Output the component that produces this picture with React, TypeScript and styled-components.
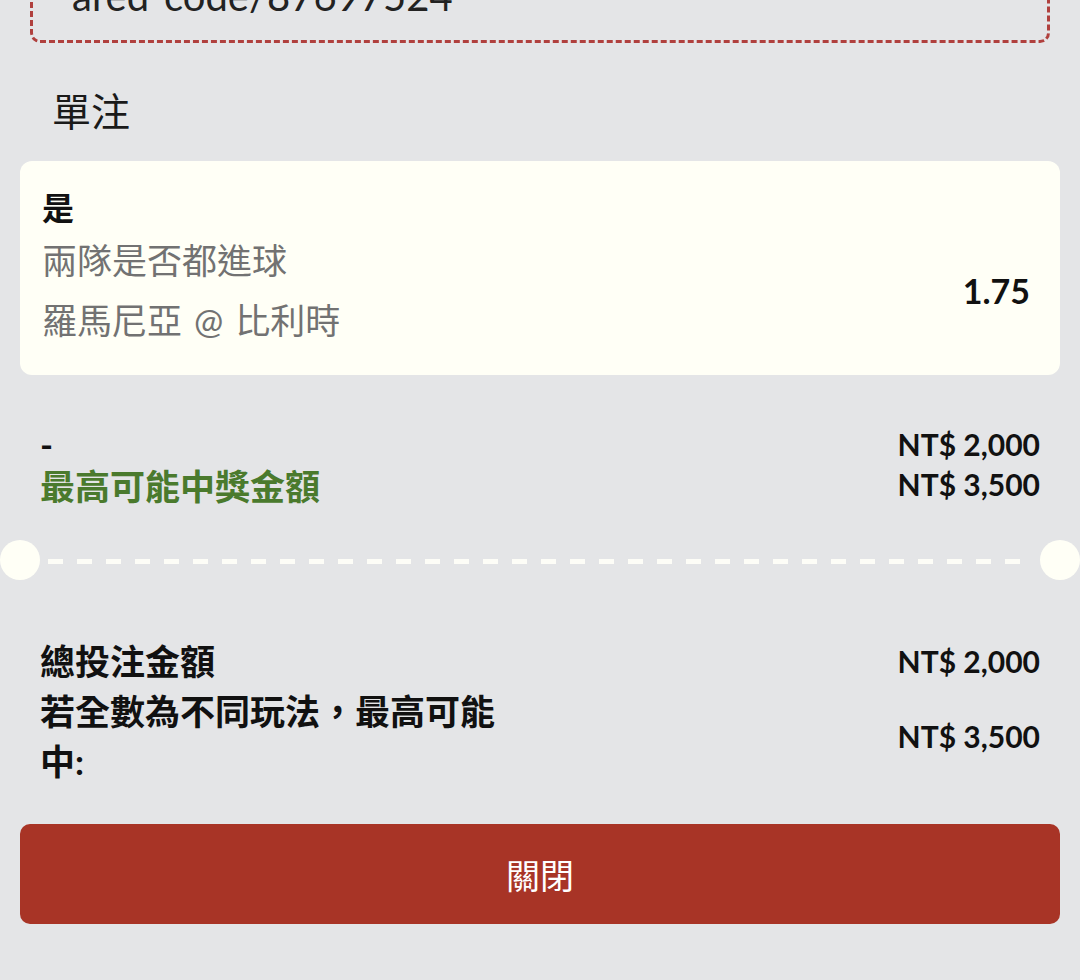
import React from "react";
import styled, { createGlobalStyle } from "styled-components";

const GlobalStyle = createGlobalStyle`
  html, body {
    margin: 0;
    padding: 0;
    background: #e4e5e7;
  }
  body {
    font-family: "Lato", "Noto Sans CJK TC", sans-serif;
    color: #111;
  }
`;

const summaryRows = [
  { label: "-", amount: "NT$ 2,000", green: false },
  { label: "最高可能中獎金額", amount: "NT$ 3,500", green: true },
];

const App = () => {
  return (
    <>
      <GlobalStyle />
      <Page>
        <CodeBox>
          <CodeText>ared-code/87697524</CodeText>
        </CodeBox>

        <Heading>單注</Heading>

        <BetCard>
          <BetTitle>是</BetTitle>
          <BetBody>
            <div>
              <BetLine>兩隊是否都進球</BetLine>
              <BetLine>羅馬尼亞 @ 比利時</BetLine>
            </div>
            <Odds>1.75</Odds>
          </BetBody>
        </BetCard>

        <AmountSection>
          {summaryRows.map((row) => (
            <AmountRow key={row.amount}>
              <AmountLabel green={row.green}>{row.label}</AmountLabel>
              <Amount>{row.amount}</Amount>
            </AmountRow>
          ))}
        </AmountSection>

        <Divider>
          <Notch />
          <DashLine />
          <Notch />
        </Divider>

        <TotalSection>
          <TotalRow>
            <TotalLabel>總投注金額</TotalLabel>
            <Amount>NT$ 2,000</Amount>
          </TotalRow>
          <TotalRow>
            <TotalLabel>若全數為不同玩法，最高可能中:</TotalLabel>
            <Amount>NT$ 3,500</Amount>
          </TotalRow>
        </TotalSection>

        <CloseButton>關閉</CloseButton>
      </Page>
    </>
  );
};

const Page = styled.div`
  width: 1080px;
  min-height: 980px;
  box-sizing: border-box;
  padding: 0 20px;
  display: flex;
  flex-direction: column;
  overflow: hidden;
`;

const CodeBox = styled.div`
  margin: -28px 10px 0;
  padding: 0 39px 20px;
  border: 3px dashed #b0403e;
  border-top: none;
  border-radius: 0 0 10px 10px;
`;

const CodeText = styled.div`
  font-size: 40px;
  line-height: 48px;
  color: #222;
`;

const Heading = styled.div`
  margin: 45px 0 0 32px;
  font-size: 39px;
  line-height: 46px;
  font-weight: 400;
  color: #1a1a1a;
`;

const BetCard = styled.div`
  margin-top: 27px;
  padding: 25px 30px 25px 22px;
  background: #fffff6;
  border-radius: 12px;
`;

const BetTitle = styled.div`
  font-size: 32px;
  line-height: 44px;
  font-weight: 700;
  color: #111;
`;

const BetBody = styled.div`
  display: flex;
  justify-content: space-between;
  align-items: center;
`;

const BetLine = styled.div`
  font-size: 35px;
  line-height: 60px;
  color: #727272;
  word-spacing: 3px;
`;

const Odds = styled.div`
  font-size: 34px;
  font-weight: 700;
  color: #111;
`;

const AmountSection = styled.div`
  margin-top: 49px;
  padding: 0 20px;
  display: flex;
  flex-direction: column;
`;

const AmountRow = styled.div`
  display: flex;
  justify-content: space-between;
  align-items: center;
  height: 40px;
`;

const AmountLabel = styled.div<{ green: boolean }>`
  font-size: 35px;
  font-weight: 700;
  color: ${(props) => (props.green ? "#4a7a2d" : "#111")};
`;

const Amount = styled.div`
  font-size: 30px;
  font-weight: 700;
  color: #111;
  white-space: nowrap;
`;

const Divider = styled.div`
  margin: 36px -20px 0;
  height: 40px;
  display: flex;
  align-items: center;
`;

const Notch = styled.div`
  width: 40px;
  height: 40px;
  border-radius: 50%;
  background: #fffff6;
  flex-shrink: 0;
`;

const DashLine = styled.div`
  flex: 1;
  height: 5px;
  margin: 3px 8px 0;
  background: repeating-linear-gradient(
    90deg,
    #fdfdf7 0 15px,
    transparent 15px 29px
  );
`;

const TotalSection = styled.div`
  margin-top: 56px;
  padding: 0 20px;
  display: flex;
  flex-direction: column;
`;

const TotalRow = styled.div`
  display: flex;
  justify-content: space-between;
  align-items: center;
`;

const TotalLabel = styled.div`
  max-width: 470px;
  font-size: 35px;
  line-height: 50px;
  font-weight: 700;
  color: #111;
`;

const CloseButton = styled.button`
  margin-top: 38px;
  height: 100px;
  border: none;
  border-radius: 10px;
  background: #a83426;
  color: #fff;
  font-family: inherit;
  font-size: 34px;
  font-weight: 400;
  cursor: pointer;
`;

export default App;
